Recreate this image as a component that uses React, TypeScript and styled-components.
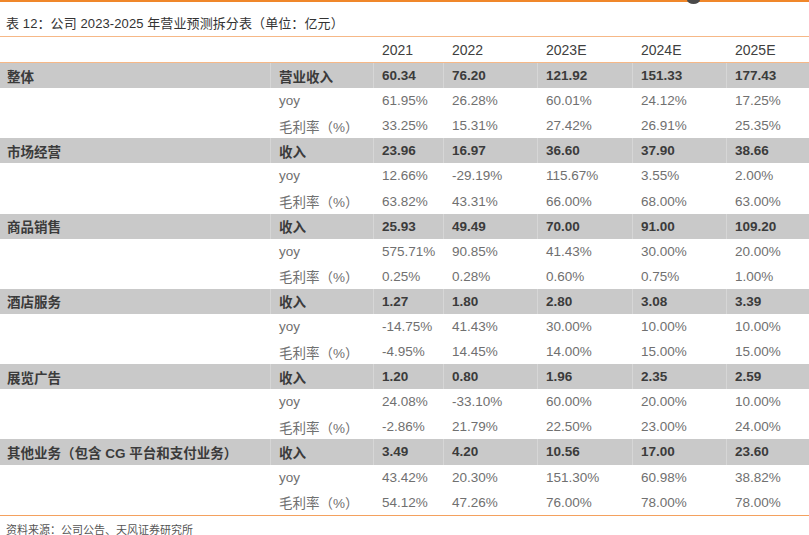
import React from 'react';
import styled, { createGlobalStyle } from 'styled-components';

const GlobalStyle = createGlobalStyle`
  html, body {
    margin: 0;
    padding: 0;
    background: #ffffff;
  }
  body {
    font-family: 'Liberation Sans', 'Noto Sans CJK SC', sans-serif;
  }
`;

const colors = {
  orange: '#f0872a',
  lightOrange: '#f6b887',
  rule: '#f4a15f',
  band: '#c9c9c9',
  bandRule: '#d6d6d6',
  strong: '#3b3b3b',
  soft: '#707070',
};

const COLUMNS = '270px 103px 70px 94px 95px 94px 1fr';

type Row = { label: string; values: string[] };
type Group = { name: string; rows: Row[] };

const years = ['2021', '2022', '2023E', '2024E', '2025E'];

const groups: Group[] = [
  {
    name: '整体',
    rows: [
      { label: '营业收入', values: ['60.34', '76.20', '121.92', '151.33', '177.43'] },
      { label: 'yoy', values: ['61.95%', '26.28%', '60.01%', '24.12%', '17.25%'] },
      { label: '毛利率（%）', values: ['33.25%', '15.31%', '27.42%', '26.91%', '25.35%'] },
    ],
  },
  {
    name: '市场经营',
    rows: [
      { label: '收入', values: ['23.96', '16.97', '36.60', '37.90', '38.66'] },
      { label: 'yoy', values: ['12.66%', '-29.19%', '115.67%', '3.55%', '2.00%'] },
      { label: '毛利率（%）', values: ['63.82%', '43.31%', '66.00%', '68.00%', '63.00%'] },
    ],
  },
  {
    name: '商品销售',
    rows: [
      { label: '收入', values: ['25.93', '49.49', '70.00', '91.00', '109.20'] },
      { label: 'yoy', values: ['575.71%', '90.85%', '41.43%', '30.00%', '20.00%'] },
      { label: '毛利率（%）', values: ['0.25%', '0.28%', '0.60%', '0.75%', '1.00%'] },
    ],
  },
  {
    name: '酒店服务',
    rows: [
      { label: '收入', values: ['1.27', '1.80', '2.80', '3.08', '3.39'] },
      { label: 'yoy', values: ['-14.75%', '41.43%', '30.00%', '10.00%', '10.00%'] },
      { label: '毛利率（%）', values: ['-4.95%', '14.45%', '14.00%', '15.00%', '15.00%'] },
    ],
  },
  {
    name: '展览广告',
    rows: [
      { label: '收入', values: ['1.20', '0.80', '1.96', '2.35', '2.59'] },
      { label: 'yoy', values: ['24.08%', '-33.10%', '60.00%', '20.00%', '10.00%'] },
      { label: '毛利率（%）', values: ['-2.86%', '21.79%', '22.50%', '23.00%', '24.00%'] },
    ],
  },
  {
    name: '其他业务（包含 CG 平台和支付业务）',
    rows: [
      { label: '收入', values: ['3.49', '4.20', '10.56', '17.00', '23.60'] },
      { label: 'yoy', values: ['43.42%', '20.30%', '151.30%', '60.98%', '38.82%'] },
      { label: '毛利率（%）', values: ['54.12%', '47.26%', '76.00%', '78.00%', '78.00%'] },
    ],
  },
];

const Page = styled.div`
  position: relative;
  width: 809px;
  height: 535px;
  overflow: hidden;
  background: #ffffff;
`;

const LogoTip = styled.div`
  position: absolute;
  left: 687px;
  top: -4px;
  width: 13px;
  height: 8px;
  border-radius: 50%;
  background: #4a4a4a;
`;

const TitleBar = styled.div`
  box-sizing: border-box;
  height: 36px;
  border-top: 2px solid ${colors.orange};
  padding: 6px 0 0 6px;
  display: flex;
  align-items: center;
  font-size: 13px;
  color: #333333;
  letter-spacing: 0.1px;
`;

const Table = styled.div`
  border-top: 1px solid ${colors.lightOrange};
  border-bottom: 1px solid ${colors.rule};
`;

const HeaderRow = styled.div`
  display: grid;
  grid-template-columns: ${COLUMNS};
  height: 25px;
  border-bottom: 1px solid ${colors.lightOrange};
  align-items: center;
  font-size: 14px;
  color: #404040;
`;

const TableRow = styled.div<{ $band?: boolean }>`
  display: grid;
  grid-template-columns: ${COLUMNS};
  height: 25.1px;
  background: ${(p) => (p.$band ? colors.band : '#ffffff')};
  color: ${(p) => (p.$band ? colors.strong : colors.soft)};
  font-weight: ${(p) => (p.$band ? 700 : 400)};
  font-size: 13.5px;
`;

const Cell = styled.div<{ $band?: boolean; $first?: boolean }>`
  display: flex;
  align-items: center;
  padding-left: ${(p) => (p.$first ? 6 : 8)}px;
  white-space: nowrap;
  border-left: 1px solid
    ${(p) => (p.$band && !p.$first ? colors.bandRule : 'transparent')};
`;

const Footer = styled.div`
  padding: 5px 0 0 6px;
  font-size: 11px;
  color: #555555;
`;

const App = () => {
  return (
    <Page>
      <GlobalStyle />
      <LogoTip />
      <TitleBar>表 12：公司 2023-2025 年营业预测拆分表（单位：亿元）</TitleBar>
      <Table>
        <HeaderRow>
          <Cell $first />
          <Cell />
          {years.map((y) => (
            <Cell key={y}>{y}</Cell>
          ))}
        </HeaderRow>
        {groups.map((g) =>
          g.rows.map((r, i) => {
            const band = i === 0;
            return (
              <TableRow key={g.name + r.label} $band={band}>
                <Cell $first $band={band}>
                  {band ? g.name : ''}
                </Cell>
                <Cell $band={band}>{r.label}</Cell>
                {r.values.map((v, j) => (
                  <Cell key={j} $band={band}>
                    {v}
                  </Cell>
                ))}
              </TableRow>
            );
          })
        )}
      </Table>
      <Footer>资料来源：公司公告、天风证券研究所</Footer>
    </Page>
  );
};

export default App;
